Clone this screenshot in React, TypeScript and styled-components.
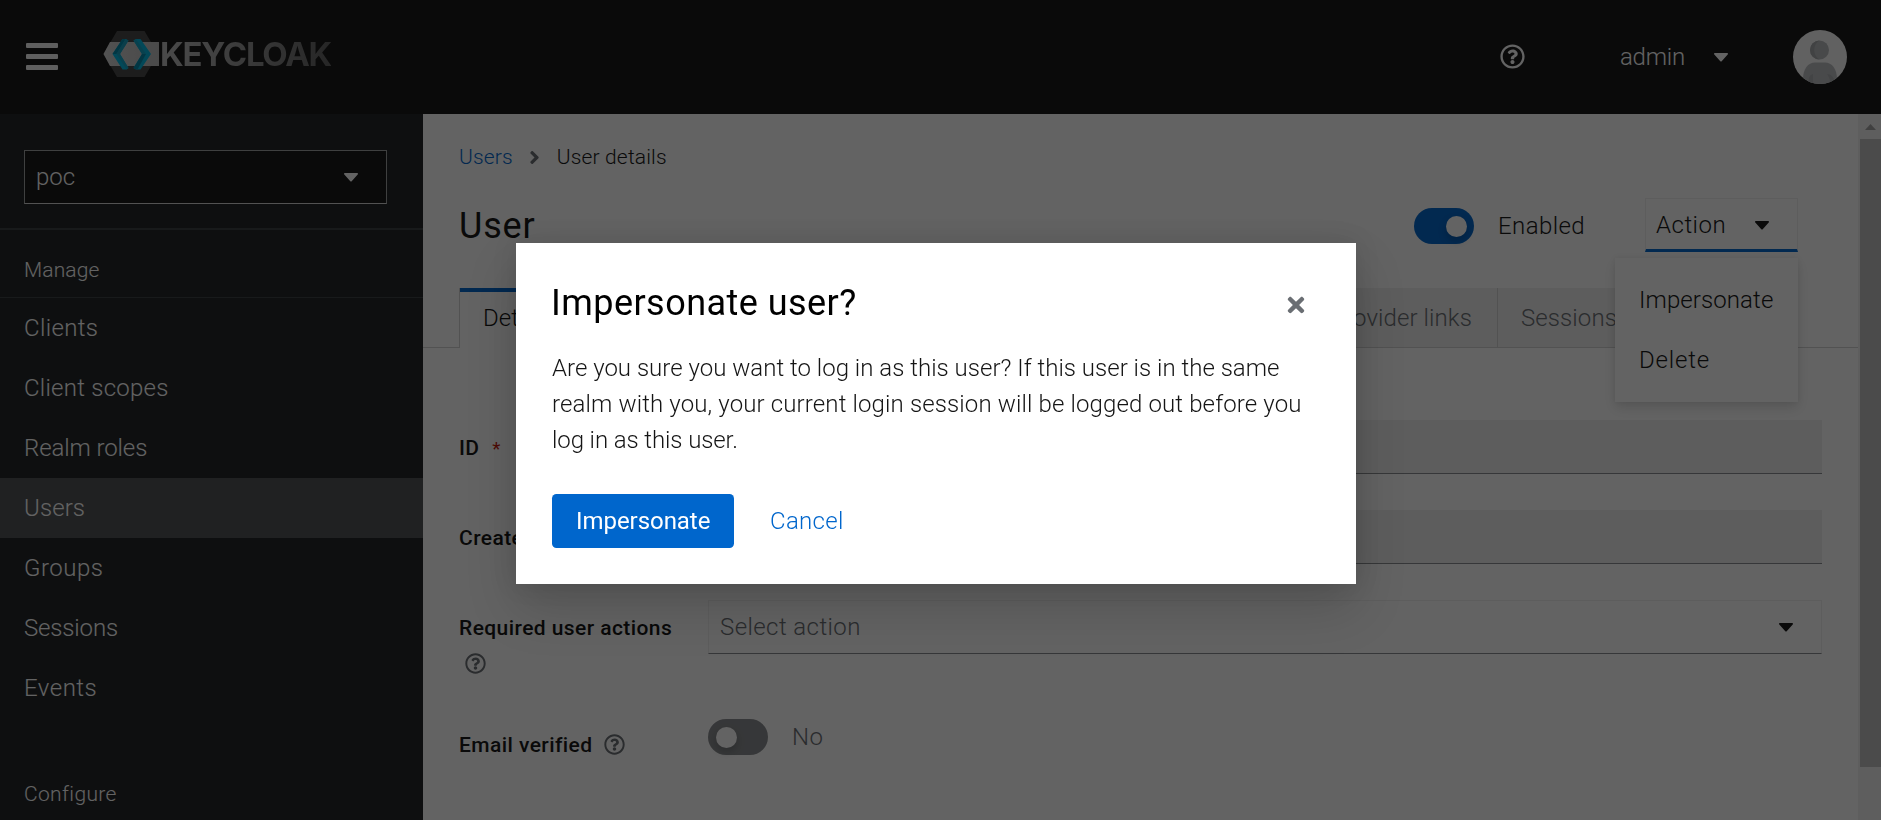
import React from 'react';
import styled, { createGlobalStyle } from 'styled-components';
import { FaCaretDown, FaRegQuestionCircle, FaTimes, FaAngleRight } from 'react-icons/fa';

const GlobalStyle = createGlobalStyle`
  * { box-sizing: border-box; }
  body {
    margin: 0;
    overflow: hidden;
    font-family: Roboto, 'Liberation Sans', sans-serif;
    font-size: 24px;
    font-weight: 300;
    line-height: 36px;
    color: #151515;
    background: #fff;
  }
  button, h1, h2, p { font: inherit; margin: 0; padding: 0; border: 0; background: none; color: inherit; }
  svg { display: block; flex: none; }
`;

const Page = styled.div`
  display: grid;
  grid-template: 114px 706px / 423px 1fr;
  width: 1881px;
  height: 820px;
  overflow: hidden;
`;

/* Masthead */
const Masthead = styled.header`
  grid-column: 1 / -1;
  display: flex;
  align-items: center;
  padding: 0 34px 0 26px;
  color: #fff;
  background: #151515;
`;

const MenuToggle = styled.button`
  display: flex;
  flex-direction: column;
  gap: 6px;
  width: 32px;
  margin: 0 45px 1px 0;
`;

const MenuBar = styled.span`
  height: 5px;
  border-radius: 1px;
  background: #f5f5f5;
`;

const Brand = styled.div`
  display: flex;
  align-items: center;
  height: 48px;
  margin-bottom: 7px;
`;

const BrandName = styled.span`
  margin-left: 1px;
  font-family: Inter, sans-serif;
  font-size: 33px;
  font-weight: 700;
  letter-spacing: -1.25px;
  background: linear-gradient(90deg, #bdbdbd, #a8a8a8 30%, #606060);
  background-clip: text;
  -webkit-background-clip: text;
  color: transparent;
`;

const Tools = styled.div`
  display: flex;
  align-items: center;
  margin-left: auto;
  > svg:first-child { margin-bottom: 2px; }
`;

const Account = styled.button`
  display: flex;
  align-items: center;
  gap: 29px;
  margin: 0 65px 0 95px;
  letter-spacing: -0.2px;
`;

/* Sidebar */
const Sidebar = styled.nav`
  color: #fff;
  background: #212427;
  overflow: hidden;
`;

const RealmArea = styled.div`
  height: 116px;
  padding: 36px 36px 24px 24px;
  border-bottom: 2px solid #3c3f42;
`;

const RealmSelect = styled.button`
  display: flex;
  align-items: center;
  justify-content: space-between;
  width: 363px;
  height: 54px;
  padding: 0 28px 0 11px;
  border: 1px solid #a0a2a4;
  border-bottom-color: #d2d2d2;
  background: #151515;
`;

const NavTitle = styled.h2<{ $first?: boolean }>`
  height: ${p => (p.$first ? 68 : 60)}px;
  padding: ${p => (p.$first ? 22 : 58)}px 24px 0;
  font-size: 21px;
  letter-spacing: ${p => (p.$first ? 0.1 : 0.35)}px;
  border-bottom: ${p => (p.$first ? '1px solid #3c3f42' : '0')};
`;

const NavItem = styled.div<{ $current?: boolean; $spacing: number }>`
  height: 60px;
  padding: 12px 24px;
  letter-spacing: ${p => p.$spacing}px;
  background: ${p => (p.$current ? '#4f5255' : 'transparent')};
`;

/* Content */
const Content = styled.div`
  display: flex;
  background: #fff;
`;

const Main = styled.main`
  flex: 1;
  min-width: 0;
`;

const Scrollbar = styled.div`
  width: 23px;
  padding-left: 2px;
  background: #f1f1f1;
`;

const ScrollUp = styled.div`
  display: flex;
  align-items: center;
  justify-content: center;
  height: 25px;
`;

const ScrollThumb = styled.div`
  height: 628px;
  background: #c1c1c1;
`;

const Breadcrumb = styled.div`
  display: flex;
  align-items: center;
  gap: 11.5px;
  height: 36px;
  margin: 25px 36px 0;
  font-size: 21px;
  letter-spacing: 0.15px;
  color: #151515;
  svg { color: #6a6e73; }
`;

const Link = styled.span`
  color: #06c;
`;

const TitleRow = styled.div`
  display: flex;
  align-items: center;
  height: 54px;
  margin: 23px 60px 36px 36px;
`;

const Title = styled.h1`
  flex: 1;
  padding-top: 2px;
  font-size: 36px;
  font-weight: 400;
  letter-spacing: 0.8px;
`;

const Switch = styled.span<{ $on?: boolean }>`
  display: flex;
  align-items: center;
  justify-content: ${p => (p.$on ? 'flex-end' : 'flex-start')};
  width: 60px;
  height: 36px;
  margin-top: ${p => (p.$on ? 2 : 0)}px;
  padding: 0 7px 0 8px;
  border-radius: 18px;
  background: ${p => (p.$on ? '#06c' : '#8a8d90')};
`;

const Knob = styled.span`
  width: 21px;
  height: 21px;
  border-radius: 50%;
  background: #fff;
  box-shadow: 0 4px 8px rgba(3, 3, 3, 0.2);
`;

const SwitchLabel = styled.span<{ $muted?: boolean }>`
  margin-top: ${p => (p.$muted ? 0 : 2)}px;
  margin-left: 24px;
  letter-spacing: 0.4px;
  color: ${p => (p.$muted ? '#6a6e73' : '#151515')};
`;

const Dropdown = styled.div`
  position: relative;
  margin-left: 60px;
`;

const DropdownToggle = styled.button`
  display: flex;
  align-items: center;
  justify-content: space-between;
  width: 153px;
  height: 54px;
  padding: 2px 28px 0 10px;
  border: 1px solid #f0f0f0;
  border-bottom: 3px solid #06c;
  letter-spacing: 0.5px;
`;

const DropdownMenu = styled.div`
  position: absolute;
  z-index: 1;
  top: 60px;
  right: 0;
  width: 183px;
  padding: 12px 0;
  background: #fff;
  box-shadow: 0 6px 12px rgba(3, 3, 3, 0.13), 0 0 6px rgba(3, 3, 3, 0.07);
`;

const DropdownItem = styled.div<{ $spacing: number }>`
  height: 60px;
  padding: 12px 24px;
  letter-spacing: ${p => p.$spacing}px;
`;

const Tabs = styled.div`
  display: flex;
  height: 60px;
  padding-left: 36px;
  border-bottom: 1px solid #d2d2d2;
  white-space: nowrap;
`;

const TabGroup = styled.div`
  display: flex;
  justify-content: space-between;
  width: 1039px;
  background: #f0f0f0;
`;

const Tab = styled.div<{ $current?: boolean }>`
  flex: none;
  height: ${p => (p.$current ? 60 : 59)}px;
  padding: 12px 25px 12px 23px;
  text-align: center;
  color: ${p => (p.$current ? '#151515' : '#6a6e73')};
  background: ${p => (p.$current ? '#fff' : '#f0f0f0')};
  border-right: 1px solid #d2d2d2;
  border-left: ${p => (p.$current ? '1px solid #d2d2d2' : '0')};
  box-shadow: ${p => (p.$current ? 'inset 0 4px #06c' : 'none')};
  letter-spacing: 0.1px;
`;

const Form = styled.form`
  display: grid;
  grid-template-columns: 249px 1fr;
  grid-template-rows: 54px 54px 83px 72px;
  row-gap: 36px;
  padding: 72px 36px 0;
`;

const FieldLabel = styled.label<{ $offset?: number }>`
  padding: ${p => p.$offset ?? 10}px 24px 0 0;
  font-size: 21px;
  font-weight: 500;
  letter-spacing: 0.42px;
`;

const Required = styled.span`
  margin-left: 7px;
  font-size: 19px;
  font-weight: 400;
  color: #c9190b;
`;

const HelpIcon = styled(FaRegQuestionCircle)<{ $inline?: boolean }>`
  display: inline-block;
  margin-left: ${p => (p.$inline ? 12 : 6)}px;
  vertical-align: -3px;
  color: #6a6e73;
`;

const ReadonlyInput = styled.div`
  height: 54px;
  background: #f0f0f0;
  border-bottom: 1px solid #8a8d90;
`;

const Select = styled.div`
  display: flex;
  align-items: center;
  justify-content: space-between;
  height: 54px;
  padding: 0 28px 0 11px;
  border: 1px solid #f0f0f0;
  border-bottom-color: #8a8d90;
`;

const Placeholder = styled.span`
  color: #6a6e73;
  letter-spacing: 0.42px;
`;

const SwitchField = styled.div`
  display: flex;
  align-items: center;
  height: 36px;
`;

/* Modal */
const Backdrop = styled.div`
  position: fixed;
  inset: 0;
  z-index: 10;
  display: flex;
  justify-content: center;
  align-items: flex-start;
  padding: 243px 9px 0 0;
  background: rgba(3, 3, 3, 0.62);
`;

const Modal = styled.section`
  width: 840px;
  height: 341px;
  padding: 36px;
  background: #fff;
  box-shadow: 0 24px 48px rgba(3, 3, 3, 0.16), 0 0 24px rgba(3, 3, 3, 0.1);
`;

const ModalHeader = styled.header`
  display: flex;
  justify-content: space-between;
  height: 47px;
  padding-right: 12px;
  color: #151515;
`;

const ModalTitle = styled.h2`
  height: 47px;
  font-size: 36px;
  font-weight: 400;
  line-height: 49px;
  letter-spacing: 0.45px;
  text-indent: -1px;
  color: #000;
`;

const CloseButton = styled.button`
  display: flex;
  align-items: center;
  height: 52px;
  color: #6a6e73;
`;

const ModalBody = styled.p`
  margin-top: 24px;
  color: #151515;
`;

const BodyLine = styled.span<{ $spacing: number }>`
  display: block;
  white-space: nowrap;
  letter-spacing: ${p => p.$spacing}px;
`;

const ModalFooter = styled.footer`
  display: flex;
  gap: 12px;
  margin-top: 36px;
`;

const Button = styled.button<{ $primary?: boolean }>`
  width: ${p => (p.$primary ? '182px' : 'auto')};
  height: 54px;
  padding: 0 24px;
  white-space: nowrap;
  border-radius: 4.5px;
  font-weight: ${p => (p.$primary ? 400 : 300)};
  letter-spacing: ${p => (p.$primary ? -0.05 : 0.3)}px;
  color: ${p => (p.$primary ? '#fff' : '#06c')};
  background: ${p => (p.$primary ? '#06c' : 'transparent')};
`;

const LogoMark = () => (
  <svg width="56" height="48" viewBox="103 30 56 48">
    <defs>
      <linearGradient id="band" x1="0" x2="1">
        <stop offset="0" stopColor="#d2d2d2" />
        <stop offset="1" stopColor="#bebebe" />
      </linearGradient>
    </defs>
    <path d="M117 31h27.500l13.500 23-13.500 23H117l-13.500-23z" fill="#484848" />
    <path d="M110 42h49v24h-49l-6.500-12z" fill="url(#band)" />
    <path d="M122.500 39h3.500l2.500 1.500-8.500 13.500 8.500 14-2 1.500h-4L112.500 54z" fill="#00b8e3" />
    <path d="M122.500 39l3 .300L116.500 54h-4z" fill="#008aaa" />
    <path d="M125.500 39.300l3 1.200-8.500 13.500h-3.500z" fill="#1a9dbd" />
    <path d="M116.500 54h3.500l8.500 14-2 1.500z" fill="#12a6c9" />
    <path d="M136 39h4.500L151 54l-10.500 15.500H136l-2.500-1.500 8.500-14-8.500-13.500z" fill="#00b8e3" />
    <path d="M133.500 68l8.500-14h4l-8.500 15.500H136z" fill="#008aaa" />
    <path d="M133.500 40.500L136 39l10 15h-4z" fill="#12a6c9" />
  </svg>
);

const Avatar = () => (
  <svg width="54" height="54" viewBox="0 0 54 54">
    <defs>
      <clipPath id="face"><circle cx="27" cy="27" r="27" /></clipPath>
    </defs>
    <g clipPath="url(#face)">
      <path d="M0 0h54v54H0z" fill="#fafafa" />
      <circle cx="26.500" cy="20" r="9.500" fill="#b8bbbe" />
      <path d="M26.500 10.500a9.500 9.500 0 0 0 0 19c-7-4-7-15 0-19z" fill="#a6a8ab" />
      <path d="M10 54V49c0-10 5-16.500 12-16.500h10c7 0 12 6.500 12 16.500v5z" fill="#bcbec1" />
      <path d="M16 54c-1-5 0-9 4-10v10zM34 44c4 0 6 3 7 5l-3 5h-1c0-5-1-7-3-10z" fill="#abadb0" />
    </g>
  </svg>
);

const Caret = () => (
  <svg width="14" height="9" viewBox="0 0 14 9">
    <path d="M1 0h12c.9 0 1.300 1 .7 1.600L7.700 8.200c-.4.400-1 .4-1.400 0L.3 1.600C-.3 1 .1 0 1 0z" fill="currentColor" />
  </svg>
);

const NAV = [
  { name: 'Clients', spacing: 0.35 },
  { name: 'Client scopes', spacing: 0.25 },
  { name: 'Realm roles', spacing: -0.1 },
  { name: 'Users', spacing: 0.1 },
  { name: 'Groups', spacing: 0.5 },
  { name: 'Sessions', spacing: -0.15 },
  { name: 'Events', spacing: 0.5 },
];

export default function App() {
  return (
    <>
      <GlobalStyle />
      <Page>
        <Masthead>
          <MenuToggle aria-label="Toggle navigation"><MenuBar /><MenuBar /><MenuBar /></MenuToggle>
          <Brand><LogoMark /><BrandName>KEYCLOAK</BrandName></Brand>
          <Tools>
            <FaRegQuestionCircle size={25} />
            <Account>admin <Caret /></Account>
            <Avatar />
          </Tools>
        </Masthead>

        <Sidebar>
          <RealmArea>
            <RealmSelect>poc <Caret /></RealmSelect>
          </RealmArea>
          <NavTitle $first>Manage</NavTitle>
          {NAV.map(item => (
            <NavItem key={item.name} $current={item.name === 'Users'} $spacing={item.spacing}>{item.name}</NavItem>
          ))}
          <NavTitle>Configure</NavTitle>
        </Sidebar>

        <Content>
          <Main>
            <Breadcrumb>
              <Link>Users</Link>
              <FaAngleRight size={21} />
              <span>User details</span>
            </Breadcrumb>
            <TitleRow>
              <Title>User</Title>
              <Switch $on><Knob /></Switch>
              <SwitchLabel>Enabled</SwitchLabel>
              <Dropdown>
                <DropdownToggle>Action <Caret /></DropdownToggle>
                <DropdownMenu>
                  <DropdownItem $spacing={0.1}>Impersonate</DropdownItem>
                  <DropdownItem $spacing={0.8}>Delete</DropdownItem>
                </DropdownMenu>
              </Dropdown>
            </TitleRow>
            <Tabs>
              <TabGroup>
                <Tab $current>Details</Tab>
                <Tab>Identity provider links</Tab>
              </TabGroup>
              <Tab>Sessions</Tab>
            </Tabs>
            <Form>
              <FieldLabel>ID <Required>*</Required></FieldLabel>
              <ReadonlyInput />
              <FieldLabel>Created at</FieldLabel>
              <ReadonlyInput />
              <FieldLabel>Required user actions <HelpIcon size={21} /></FieldLabel>
              <Select><Placeholder>Select action</Placeholder><Caret /></Select>
              <FieldLabel $offset={8}>Email verified<HelpIcon size={21} $inline /></FieldLabel>
              <SwitchField><Switch><Knob /></Switch><SwitchLabel $muted>No</SwitchLabel></SwitchField>
            </Form>
          </Main>
          <Scrollbar>
            <ScrollUp>
              <svg width="11" height="6" viewBox="0 0 11 6"><path d="M5.500 0L11 6H0z" fill="#a3a3a3" /></svg>
            </ScrollUp>
            <ScrollThumb />
          </Scrollbar>
        </Content>
      </Page>

      <Backdrop>
        <Modal role="dialog" aria-label="Impersonate user?">
          <ModalHeader>
            <ModalTitle>Impersonate user?</ModalTitle>
            <CloseButton aria-label="Close"><FaTimes size={24} /></CloseButton>
          </ModalHeader>
          <ModalBody>
            <BodyLine $spacing={0.01}>Are you sure you want to log in as this user? If this user is in the same </BodyLine>
            <BodyLine $spacing={0.13}>realm with you, your current login session will be logged out before you </BodyLine>
            <BodyLine $spacing={-0.1}>log in as this user.</BodyLine>
          </ModalBody>
          <ModalFooter>
            <Button $primary>Impersonate</Button>
            <Button>Cancel</Button>
          </ModalFooter>
        </Modal>
      </Backdrop>
    </>
  );
}
